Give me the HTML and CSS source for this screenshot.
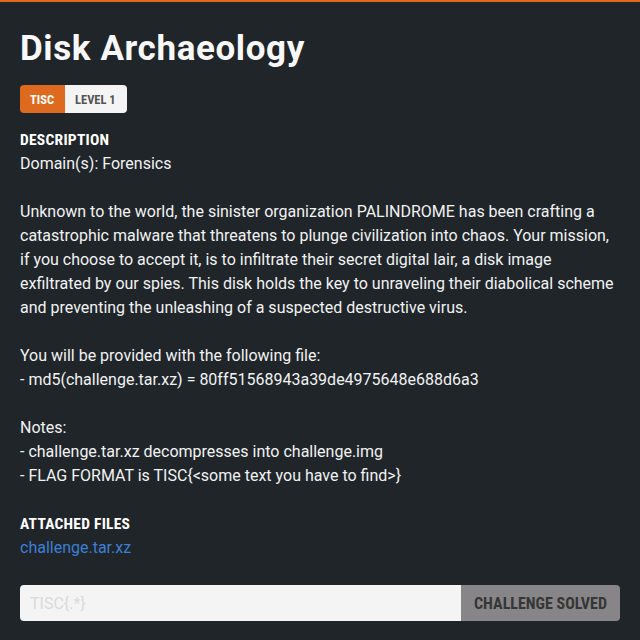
FILE: index.html
```html
<!DOCTYPE html>
<html>
<head>
<meta charset="utf-8">
<link rel="stylesheet" href="styles.css">
</head>
<body>
<main class="page">
  <h1 class="title">Disk Archaeology</h1>
  <div class="badges">
    <span class="badge badge-cat">TISC</span>
    <span class="badge badge-level">LEVEL 1</span>
  </div>
  <section class="section">
    <h2 class="label">DESCRIPTION</h2>
    <p class="text">Domain(s): Forensics<br><br>Unknown to the world, the sinister organization PALINDROME has been crafting a catastrophic malware that threatens to plunge civilization into chaos. Your mission, if you choose to accept it, is to infiltrate their secret digital lair, a disk image exfiltrated by our spies. This disk holds the key to unraveling their diabolical scheme and preventing the unleashing of a suspected destructive virus.<br><br>You will be provided with the following file:<br>- md5(challenge.tar.xz) = 80ff51568943a39de4975648e688d6a3<br><br>Notes:<br>- challenge.tar.xz decompresses into challenge.img<br>- FLAG FORMAT is TISC{&lt;some text you have to find&gt;}</p>
  </section>
  <section class="section files">
    <h2 class="label">ATTACHED FILES</h2>
    <a class="file" href="#">challenge.tar.xz</a>
  </section>
  <form class="submit">
    <input class="flag" type="text" placeholder="TISC{.*}">
    <button class="solved" type="button">CHALLENGE SOLVED</button>
  </form>
</main>
</body>
</html>
```
FILE: styles.css
```css
html, body {
  margin: 0;
  padding: 0;
  background: #1f2529;
}
body {
  border-top: 2px solid #e0691e;
  font-family: Roboto, "Noto Sans", sans-serif;
  color: #ffffff;
}
.page {
  padding: 26px 20px 0 20px;
}
.title {
  margin: 0;
  font-family: Roboto, sans-serif;
  font-weight: 700;
  font-size: 35px;
  letter-spacing: 0.6px;
  line-height: 42px;
  color: #f8f8f8;
}
.badges {
  display: flex;
  margin-top: 15px;
  height: 28px;
}
.badge {
  display: flex;
  align-items: center;
  padding: 0 11px 0 10px;
  font-family: "Roboto Condensed", Roboto, sans-serif;
  font-weight: 700;
  font-size: 12.5px;
}
.badge-cat {
  background: #dd6a1f;
  color: #fff;
  border-radius: 4px 0 0 4px;
}
.badge-level {
  background: #f4f4f4;
  color: #555;
  border-radius: 0 4px 4px 0;
}
.section {
  margin-top: 15px;
}
.files {
  margin-top: 24px;
}
.label {
  margin: 0;
  font-family: "Roboto Condensed", Roboto, sans-serif;
  font-weight: 700;
  font-size: 15.5px;
  letter-spacing: 0.25px;
  line-height: 24px;
  color: #fff;
}
.text {
  margin: 0;
  font-size: 16px;
  line-height: 24px;
  color: #f2f2f2;
}
.file {
  display: block;
  font-size: 16px;
  line-height: 24px;
  color: #3d7fd6;
  text-decoration: none;
}
.submit {
  display: flex;
  margin-top: 25px;
  height: 36px;
}
.flag {
  flex: 1;
  margin: 0;
  border: 0;
  padding: 0 10px;
  background: #f4f4f4;
  border-radius: 4px 0 0 4px;
  font-family: Roboto, sans-serif;
  font-size: 16px;
  color: #333;
  outline: none;
}
.flag::placeholder {
  color: #dadada;
}
.solved {
  width: 159px;
  margin: 0;
  border: 0;
  padding: 0;
  background: #878587;
  color: #363636;
  border-radius: 0 4px 4px 0;
  font-family: "Roboto Condensed", Roboto, sans-serif;
  font-weight: 700;
  font-size: 16px;
}
```
